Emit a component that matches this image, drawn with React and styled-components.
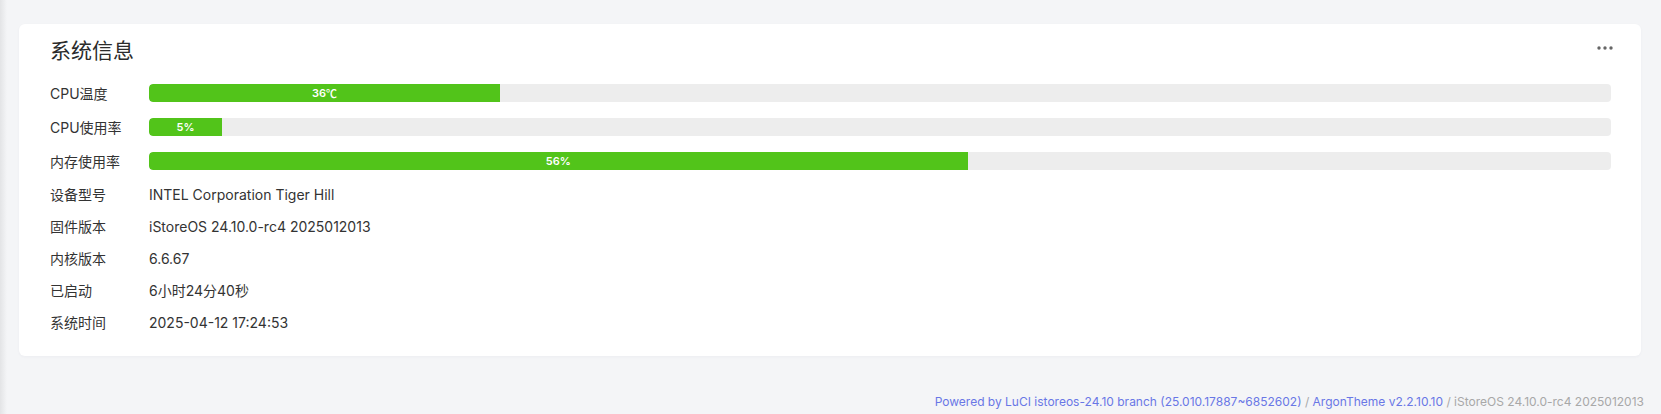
import React from "react";
import styled, { createGlobalStyle } from "styled-components";

const Global = createGlobalStyle`
  html, body {
    margin: 0;
    padding: 0;
  }
  body {
    background: linear-gradient(to right, #e3e4e6 0, #f4f5f7 7px, #f4f5f7 100%);
    font-family: "Inter", "Noto Sans CJK SC", sans-serif;
    color: #333;
  }
`;

const Page = styled.div`
  min-height: 414px;
  box-sizing: border-box;
  padding: 24px 20px 0 19px;
`;

const Card = styled.section`
  background: #fff;
  border-radius: 6px;
  box-shadow: 0 1px 3px rgba(50, 50, 93, 0.04);
  padding: 0 30px 18px 31px;
`;

const Header = styled.div`
  display: flex;
  justify-content: space-between;
  align-items: flex-start;
  padding-top: 16px;
  margin-bottom: 14px;
`;

const Title = styled.h2`
  margin: 0;
  font-size: 21px;
  line-height: 22px;
  font-weight: 400;
  color: #2b2b2b;
`;

const More = styled.button`
  border: none;
  background: none;
  padding: 0;
  margin: 5px -2px 0 0;
  height: 6px;
  display: flex;
  align-items: center;
  cursor: pointer;
`;

const Rows = styled.div`
  display: grid;
  grid-template-columns: 99px 1fr;
`;

const Label = styled.div`
  font-size: 14px;
  height: ${(p) => p.$h}px;
  display: flex;
  align-items: center;
  color: #333;
`;

const Value = styled(Label)`
  color: #333;
`;

const Track = styled.div`
  width: 100%;
  height: 18px;
  background: #ededed;
  border-radius: 4px;
  overflow: hidden;
  display: flex;
`;

const Fill = styled.div`
  height: 100%;
  background: #52c41a;
  border-radius: 4px 0 0 4px;
  display: flex;
  align-items: center;
  justify-content: center;
  color: #fff;
  font-size: 11px;
  font-weight: 600;
  white-space: nowrap;
`;

const Unit = styled.span`
  font-family: "Noto Sans CJK SC", sans-serif;
  font-weight: 500;
`;

const Footer = styled.footer`
  margin-top: 36px;
  margin-right: -3px;
  text-align: right;
  font-size: 12px;
  line-height: 20px;
  color: #a8a8a8;
`;

const Link = styled.a`
  color: #6977e6;
  text-decoration: none;
`;

const bars = [
  { label: "CPU温度", text: "36", unit: "℃", pct: 24 },
  { label: "CPU使用率", text: "5%", pct: 5 },
  { label: "内存使用率", text: "56%", pct: 56 },
];

const info = [
  ["设备型号", "INTEL Corporation Tiger Hill"],
  ["固件版本", "iStoreOS 24.10.0-rc4 2025012013"],
  ["内核版本", "6.6.67"],
  ["已启动", "6小时24分40秒"],
  ["系统时间", "2025-04-12 17:24:53"],
];

function Dots() {
  return (
    <svg width="16" height="4" viewBox="0 0 16 4">
      <circle cx="2" cy="2" r="1.7" fill="#666" />
      <circle cx="8" cy="2" r="1.7" fill="#666" />
      <circle cx="14" cy="2" r="1.7" fill="#666" />
    </svg>
  );
}

export default function App() {
  return (
    <>
      <Global />
      <Page>
        <Card>
          <Header>
            <Title>系统信息</Title>
            <More aria-label="more">
              <Dots />
            </More>
          </Header>
          <Rows>
            {bars.map((b) => (
              <React.Fragment key={b.label}>
                <Label $h={34}>{b.label}</Label>
                <Value $h={34}>
                  <Track>
                    <Fill style={{ width: `${b.pct}%` }}>
                      {b.text}
                      {b.unit && <Unit>{b.unit}</Unit>}
                    </Fill>
                  </Track>
                </Value>
              </React.Fragment>
            ))}
            {info.map(([k, v]) => (
              <React.Fragment key={k}>
                <Label $h={32}>{k}</Label>
                <Value $h={32}>{v}</Value>
              </React.Fragment>
            ))}
          </Rows>
        </Card>
        <Footer>
          <Link href="#">Powered by LuCI istoreos-24.10 branch (25.010.17887~6852602)</Link>
          {" / "}
          <Link href="#">ArgonTheme v2.2.10.10</Link>
          {" / iStoreOS 24.10.0-rc4 2025012013"}
        </Footer>
      </Page>
    </>
  );
}
